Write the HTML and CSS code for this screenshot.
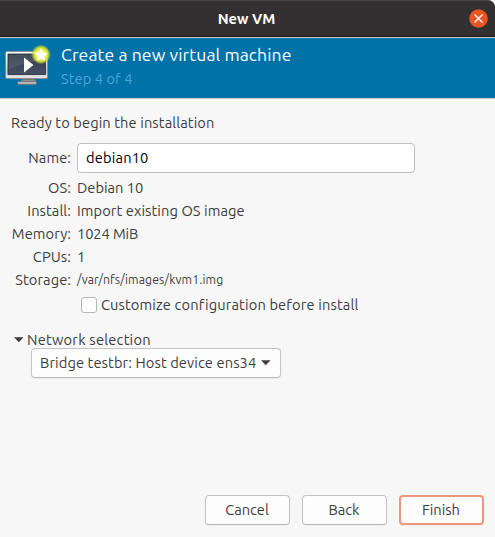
FILE: index.html
```html
<!DOCTYPE html>
<html lang="en">
<head>
<meta charset="utf-8">
<title>New VM</title>
<link rel="stylesheet" href="styles.css">
</head>
<body>
<div class="window">
  <header class="titlebar">
    <span class="window-title">New VM</span>
    <button class="close" aria-label="Close"><svg width="19" height="19" viewBox="0 0 19 19"><circle cx="9.5" cy="9.5" r="9.3" fill="#e95420"/><path d="M6 6l7 7M13 6l-7 7" stroke="#fff" stroke-width="1.4" stroke-linecap="square"/></svg></button>
  </header>
  <section class="banner">
    <svg class="vm-icon" width="48" height="48" viewBox="0 0 48 48">
      <defs>
        <linearGradient id="frame" x2="0" y2="1"><stop offset="0" stop-color="#fff"/><stop offset=".75" stop-color="#ccc"/><stop offset="1" stop-color="#e8e8e8"/></linearGradient>
        <linearGradient id="screen" x2="0" y2="1"><stop offset="0" stop-color="#2f3948"/><stop offset="1" stop-color="#465265"/></linearGradient>
        <linearGradient id="stand" x2="0" y2="1"><stop offset="0" stop-color="#555"/><stop offset="1" stop-color="#aaa"/></linearGradient>
        <radialGradient id="glow"><stop offset="0" stop-color="#fff"/><stop offset=".4" stop-color="#f8f56a"/><stop offset=".7" stop-color="#dce52a" stop-opacity=".95"/><stop offset="1" stop-color="#b9d42a" stop-opacity="0"/></radialGradient>
      </defs>
      <path d="M18 34h13l1 4H17z" fill="url(#stand)"/>
      <rect x="13.500" y="37.500" width="19" height="3" rx="1" fill="#b5b5b5" stroke="#666" stroke-width=".7"/>
      <rect x="1.500" y="7.500" width="42" height="27" rx="1.500" fill="url(#frame)" stroke="#888" stroke-width=".8"/>
      <rect x="4" y="10" width="37.500" height="20.500" fill="url(#screen)" stroke="#242c38" stroke-width=".8"/>
      <path d="M4.500 10.500h36v5q-18 2-36 10z" fill="#fff" opacity=".1"/>
      <path d="M20 13.500v15L29.500 21z" fill="#fff"/>
      <circle cx="37" cy="10.500" r="10" fill="url(#glow)"/>
      <path d="M37 4l2 4.300 4.700.6-3.400 3.300.9 4.700-4.200-2.300-4.200 2.300.9-4.700L30.300 8.900l4.700-.6z" fill="#fff"/>
    </svg>
    <div class="banner-text">
      <h1>Create a new virtual machine</h1>
      <p class="step">Step 4 of 4</p>
    </div>
  </section>
  <main class="content">
    <p class="ready">Ready to begin the installation</p>
    <div class="details">
      <label class="key name-key" for="name">Name:</label><input id="name" class="name" value="debian10">
      <span class="key">OS:</span><span class="value">Debian 10</span>
      <span class="key">Install:</span><span class="value install">Import existing OS image</span>
      <span class="key">Memory:</span><span class="value memory">1024 MiB</span>
      <span class="key">CPUs:</span><span class="value">1</span>
      <span class="key">Storage:</span><span class="value path">/var/nfs/images/kvm1.img</span>
    </div>
    <label class="customize"><input type="checkbox" class="check"><span>Customize configuration before install</span></label>
    <div class="expander"><svg width="10" height="6" viewBox="0 0 10 6"><path d="M0 .3h9.600L4.800 5.300z" fill="#3d3d3d"/></svg><span>Network selection</span></div>
    <button class="btn network"><span>Bridge testbr: Host device ens34</span><svg width="10" height="6" viewBox="0 0 10 6"><path d="M0 .3h9.600L4.800 5.300z" fill="#3d3d3d"/></svg></button>
  </main>
  <footer class="actions">
    <button class="btn cancel">Cancel</button>
    <button class="btn back">Back</button>
    <button class="btn finish">Finish</button>
  </footer>
</div>
</body>
</html>
```
FILE: styles.css
```css
* { box-sizing: border-box; }
body { margin: 0; background: #f7f7f7; }
h1, p { margin: 0; font-weight: 400; }
svg { display: block; flex: none; }
.window {
  height: 537px;
  display: flex;
  flex-direction: column;
  background: #f7f7f7;
  color: #3d3d3d;
  font: 14.667px/20px Ubuntu, "Noto Sans", sans-serif;
  white-space: nowrap;
}
.titlebar {
  height: 37px;
  display: grid;
  grid-template-columns: 1fr auto 1fr;
  align-items: center;
  padding: 0 7px 1px;
  background: #323030;
  border-top: 1px solid #464444;
  border-bottom: 1px solid #1c1b1b;
  border-radius: 0 7px 0 0;
  color: #fff;
}
.window-title { grid-column: 2; font-weight: 700; position: relative; left: -1px; top: 1px; }
.close { justify-self: end; padding: 0; border: 0; background: none; }
.banner {
  height: 62px;
  display: flex;
  padding: 6px 4px;
  background: #0072a8;
  border-top: 1px solid #c5c9cb;
  border-bottom: 1px solid #c5c5c5;
}
.banner-text { margin-left: 9px; }
h1 { font-size: 17.6px; line-height: 21px; letter-spacing: .09px; color: #fff; }
.step { margin-top: 4px; line-height: 20px; letter-spacing: .06px; color: #4ba5d8; }
.content { flex: 1; padding: 14px 12px 0 11px; }
.ready { height: 20px; letter-spacing: .1px; }
.details {
  display: grid;
  grid-template-columns: 60px 338px;
  grid-template-rows: 30px;
  grid-auto-rows: 23px;
  column-gap: 6px;
  align-items: center;
  margin-top: 10px;
}
.key { justify-self: end; letter-spacing: .08px; }
.details > :nth-child(n+3) { position: relative; top: 3px; }
.name {
  width: 338px;
  height: 30px;
  padding: 0 8px 2px;
  border: 1px solid #c0c0c0;
  border-radius: 4px;
  background: #fff;
  color: #000;
  font: inherit;
  letter-spacing: .16px;
}
.install { letter-spacing: .08px; }
.memory { letter-spacing: -.1px; }
.path { font-size: 12.2px; letter-spacing: .14px; }
.customize { display: flex; align-items: center; height: 20px; margin: 7px 0 0 70px; letter-spacing: .14px; }
.check {
  appearance: none;
  width: 16px;
  height: 16px;
  margin: 0 4px 0 0;
  border: 1px solid #b5b5b5;
  border-radius: 3px;
  background: #fff;
}
.expander { display: flex; align-items: center; gap: 3px; height: 20px; margin: 15px 0 0 3px; letter-spacing: .22px; }
.btn {
  display: flex;
  align-items: center;
  justify-content: center;
  height: 30px;
  padding: 0;
  border: 1px solid #c3c3c3;
  border-bottom-color: #bababa;
  border-radius: 4px;
  background: #fdfdfd;
  color: #3d3d3d;
  font: inherit;
  box-shadow: 0 1px 1px #0000000c;
}
.network { width: 250px; margin: -2px 0 0 20px; padding: 0 9px 0 8px; justify-content: space-between; letter-spacing: .1px; }
.actions { display: flex; justify-content: flex-end; gap: 12px; padding: 0 11px 12px 0; }
.actions .btn { width: 85px; padding-right: 1px; }
.actions .finish { border: 2px solid #eb987a; }
```
